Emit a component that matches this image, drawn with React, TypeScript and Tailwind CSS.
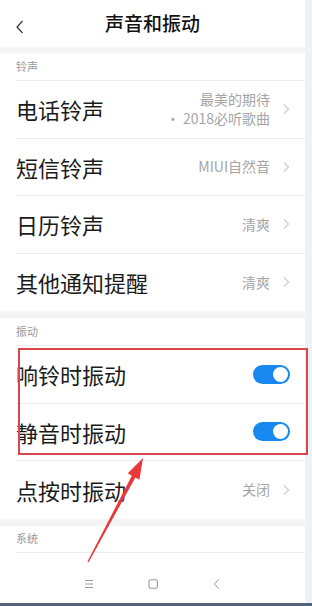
const FONT = "font-['Noto_Sans_CJK_SC','Noto_Sans',sans-serif]";

function Chevron() {
  return (
    <svg width="8" height="12" viewBox="0 0 8 12" className="shrink-0">
      <polyline points="2,1.5 6.5,6 2,10.5" fill="none" stroke="#c9cbcf" strokeWidth="1.1" />
    </svg>
  );
}

function Toggle() {
  return (
    <div className="flex h-[19px] w-[37px] items-center justify-end rounded-full bg-[#1688f0] pr-[2px]">
      <div className="h-[15px] w-[15px] rounded-full bg-white" />
    </div>
  );
}

function SectionLabel({ text, h = 'h-[28px]' }: { text: string; h?: string }) {
  return (
    <div className={`ml-4 flex ${h} items-center border-b border-[#ececec] text-[11px] text-[#999]`}>{text}</div>
  );
}

function Row({
  title,
  value,
  value2,
  toggle,
  last,
}: {
  title: string;
  value?: string;
  value2?: string;
  toggle?: boolean;
  last?: boolean;
}) {
  return (
    <div className={`ml-4 flex h-[57.5px] items-center pr-[15px] ${last ? '' : 'border-b border-[#ececec]'}`}>
      <span className="flex-1 text-[22px] leading-none text-[#1b1b1b]">{title}</span>
      {toggle ? (
        <Toggle />
      ) : (
        <div className="flex items-center gap-[12px]">
          <div className="flex flex-col items-end text-[14px] leading-[19px] text-[#a5a5a5]">
            <span>{value}</span>
            {value2 && <span>{value2}</span>}
          </div>
          <Chevron />
        </div>
      )}
    </div>
  );
}

export default function App() {
  return (
    <div className={`relative h-[606px] w-[312px] overflow-hidden bg-white ${FONT}`}>
      <div className="flex h-[603px]">
        <div className="flex w-[305px] flex-col bg-white">
          {/* header */}
          <div className="relative flex h-[47px] items-center justify-center">
            <svg width="10" height="14" viewBox="0 0 10 14" className="absolute left-[15px] top-[20px]">
              <polyline points="7.5,1 2,7 7.5,13" fill="none" stroke="#333" strokeWidth="1.2" />
            </svg>
            <span className="text-[19px] font-medium text-[#111]">声音和振动</span>
          </div>
          <div className="h-[6px] bg-[#f4f4f5]" />

          <SectionLabel text="铃声" />
          <Row title="电话铃声" value="最美的期待" value2="· 2018必听歌曲" />
          <Row title="短信铃声" value="MIUI自然音" />
          <Row title="日历铃声" value="清爽" />
          <Row title="其他通知提醒" value="清爽" last />

          <div className="h-[7px] bg-[#f4f4f5]" />
          <SectionLabel text="振动" />
          <Row title="响铃时振动" toggle />
          <Row title="静音时振动" toggle />
          <Row title="点按时振动" value="关闭" last />

          <div className="h-[7px] bg-[#f4f4f5]" />
          <SectionLabel text="系统" h="h-[27px]" />

          {/* nav bar */}
          <div className="flex flex-1 items-end justify-center gap-[52px] pb-[14px] text-[#9a9a9a]">
            <svg width="12" height="10" viewBox="0 0 12 10">
              <line x1="2" y1="1.5" x2="10" y2="1.5" stroke="#9a9a9a" strokeWidth="1" />
              <line x1="2" y1="5" x2="10" y2="5" stroke="#9a9a9a" strokeWidth="1" />
              <line x1="2" y1="8.5" x2="10" y2="8.5" stroke="#9a9a9a" strokeWidth="1" />
            </svg>
            <svg width="12" height="10" viewBox="0 0 12 10">
              <rect x="2" y="0.8" width="8.4" height="8.4" rx="1.8" fill="none" stroke="#9a9a9a" strokeWidth="1.1" />
            </svg>
            <svg width="12" height="10" viewBox="0 0 12 10">
              <polyline points="7.5,0.5 3.5,5 7.5,9.5" fill="none" stroke="#9a9a9a" strokeWidth="1" />
            </svg>
          </div>
        </div>
        <div className="w-[7px] bg-[#eef1f6]" />
      </div>
      <div className="h-[3px] bg-[#56667a]" />

      {/* annotation: red box */}
      <div className="absolute left-[18px] top-[348px] h-[107px] w-[290px] border-2 border-[#d9464b]" />
      {/* annotation: red arrow */}
      <svg className="absolute left-0 top-0" width="312" height="606" viewBox="0 0 312 606">
        <polygon
          points="87.4,561.8 131.8,475.7 127.8,473.3 143,458 139.4,479.7 135.4,477.5 88.6,562.3"
          fill="#e8383a"
        />
      </svg>
    </div>
  );
}
